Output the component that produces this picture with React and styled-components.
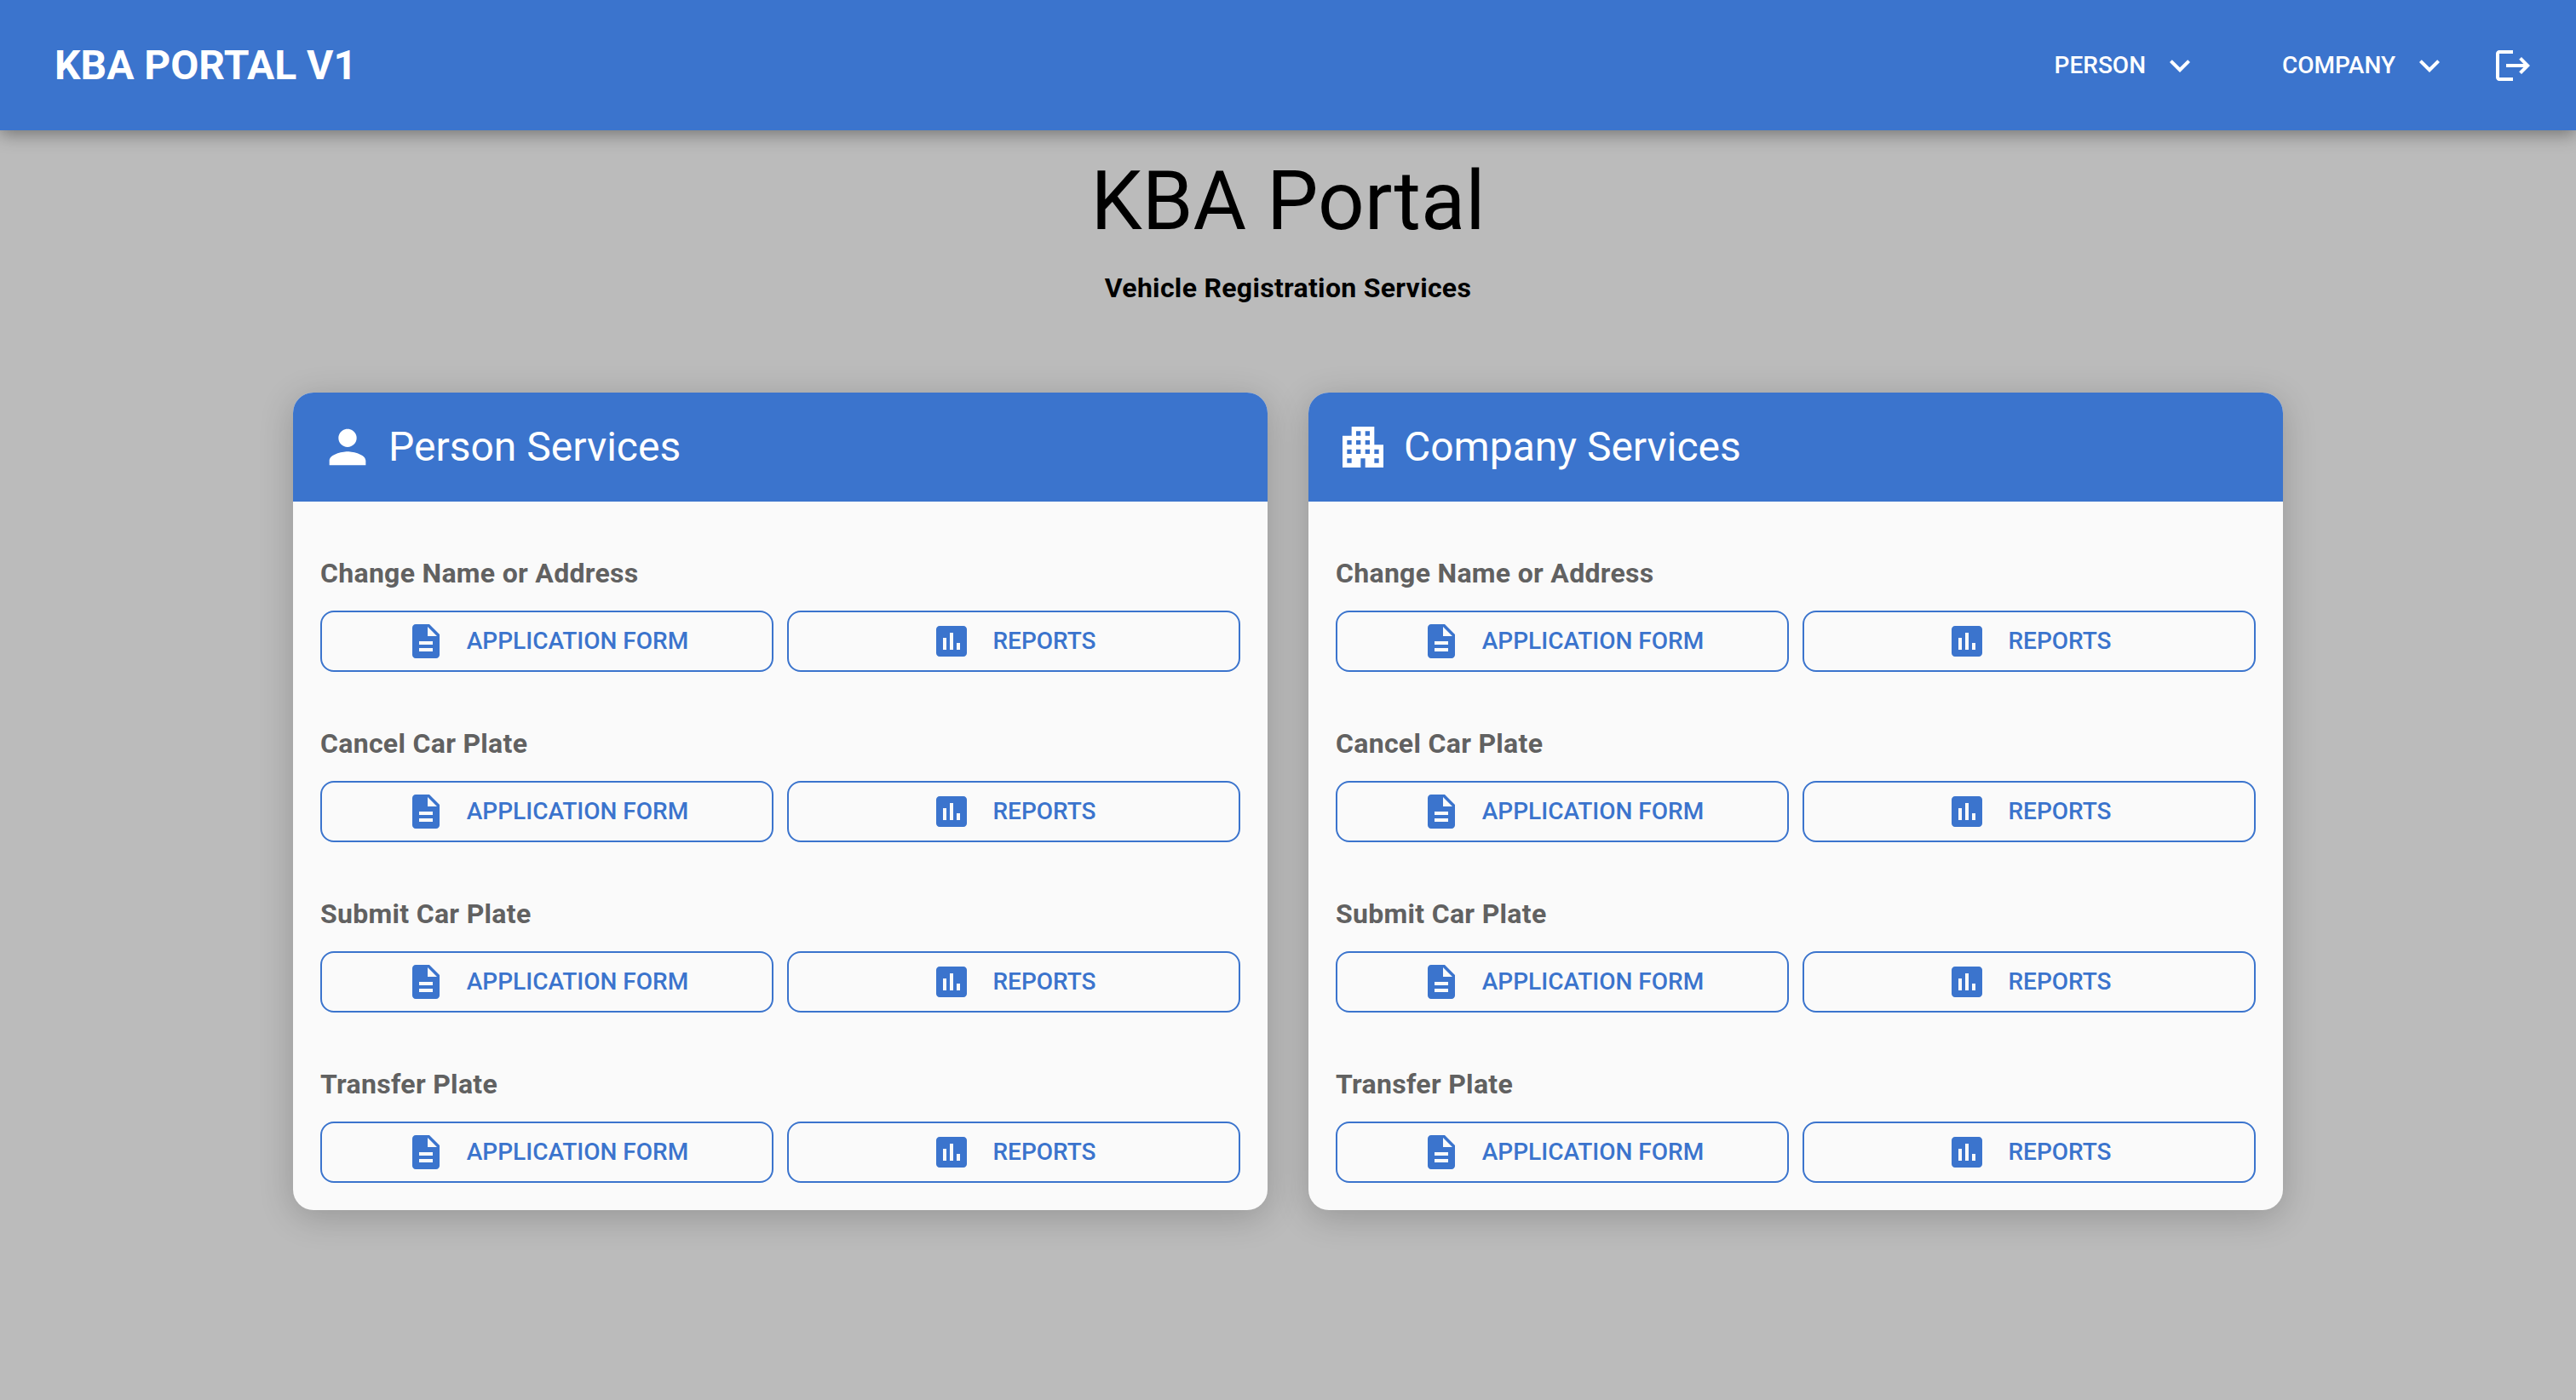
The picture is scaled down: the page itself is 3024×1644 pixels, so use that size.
import React from 'react';
import styled, {createGlobalStyle} from 'styled-components';

const blue = '#3b74cd';

const GlobalStyle = createGlobalStyle`
  html, body {
    margin: 0;
    padding: 0;
    background: #bbbbbb;
  }
  body {
    font-family: Roboto, "Liberation Sans", sans-serif;
  }
`;

/////////////// ICONS /////////////
const ICONS = {
  person: 'M12 12c2.21 0 4-1.79 4-4s-1.79-4-4-4-4 1.79-4 4 1.79 4 4 4zm0 2c-2.67 0-8 1.34-8 4v2h16v-2c0-2.66-5.33-4-8-4z',
  apartment:
    'M17 11V3H7v4H3v14h8v-4h2v4h8V11h-4zM7 19H5v-2h2v2zm0-4H5v-2h2v2zm0-4H5V9h2v2zm4 4H9v-2h2v2zm0-4H9V9h2v2zm0-4H9V5h2v2zm4 8h-2v-2h2v2zm0-4h-2V9h2v2zm0-4h-2V5h2v2zm4 12h-2v-2h2v2zm0-4h-2v-2h2v2z',
  description:
    'M14 2H6c-1.1 0-1.99.9-1.99 2L4 20c0 1.1.89 2 1.99 2H18c1.1 0 2-.9 2-2V8l-6-6zm2 16H8v-2h8v2zm0-4H8v-2h8v2zm-3-5V3.5L18.5 9H13z',
  assessment:
    'M19 3H5c-1.1 0-2 .9-2 2v14c0 1.1.9 2 2 2h14c1.1 0 2-.9 2-2V5c0-1.1-.9-2-2-2zM9 17H7v-7h2v7zm4 0h-2V7h2v10zm4 0h-2v-4h2v4z',
  expand: 'M16.59 8.59L12 13.17 7.41 8.59 6 10l6 6 6-6z',
  logout:
    'M17 7l-1.41 1.41L18.17 11H8v2h10.17l-2.58 2.58L17 17l5-5zM4 5h8V3H4c-1.1 0-2 .9-2 2v14c0 1.1.9 2 2 2h8v-2H4V5z',
};

const IconSvg = styled.svg`
  width: ${props => props.size}px;
  height: ${props => props.size}px;
  flex-shrink: 0;
  display: block;
  fill: currentColor;
`;

const Icon = ({name, size = 48}) => (
  <IconSvg size={size} viewBox="0 0 24 24" aria-hidden="true">
    <path d={ICONS[name]} />
  </IconSvg>
);

/////////////// TOP BAR /////////////
const TopBar = styled.header`
  height: 153px;
  box-sizing: border-box;
  padding: 0 50px 0 64px;
  display: flex;
  align-items: center;
  justify-content: space-between;
  background: ${blue};
  color: #fff;
  box-shadow: 0 4px 20px rgba(0, 0, 0, 0.4);
`;

const Brand = styled.div`
  font-size: 48px;
  font-weight: 700;
  line-height: 1;
`;

const Nav = styled.nav`
  display: flex;
  align-items: center;
`;

const NavItem = styled.button`
  display: flex;
  align-items: center;
  gap: 16px;
  margin-right: ${props => props.gap}px;
  padding: 0;
  border: 0;
  background: none;
  color: inherit;
  font-family: inherit;
  font-size: 28px;
  font-weight: 500;
`;

const LogoutButton = styled.button`
  display: block;
  padding: 0;
  border: 0;
  background: none;
  color: inherit;
`;

/////////////// HERO /////////////
const Hero = styled.div`
  padding-top: 26px;
  text-align: center;
`;

const Title = styled.h1`
  margin: 0;
  font-size: 96px;
  font-weight: 400;
  line-height: 1.2;
  color: #000;
`;

const Subtitle = styled.p`
  margin: 20px 0 0;
  font-size: 32px;
  font-weight: 700;
  line-height: 1.5;
  letter-spacing: 0.00938em;
  color: #000;
`;

/////////////// CARDS /////////////
const CardGrid = styled.main`
  display: grid;
  grid-template-columns: repeat(2, 1144px);
  gap: 48px;
  justify-content: center;
  margin-top: 99px;
  padding-bottom: 222px;
`;

const Card = styled.section`
  border-radius: 24px;
  overflow: hidden;
  background: #fafafa;
  box-shadow: 0 8px 40px rgba(0, 0, 0, 0.2);
`;

const CardHeader = styled.div`
  height: 128px;
  box-sizing: border-box;
  padding: 0 32px;
  display: flex;
  align-items: center;
  gap: 16px;
  background: ${blue};
  color: #fff;
`;

const CardTitle = styled.h2`
  margin: 0;
  font-size: 48px;
  font-weight: 400;
  line-height: 1;
`;

const CardBody = styled.div`
  padding: 60px 32px 32px;
  display: flex;
  flex-direction: column;
  gap: 60px;
`;

const ServiceLabel = styled.h3`
  margin: 0 0 20px;
  font-size: 32px;
  font-weight: 700;
  line-height: 48px;
  letter-spacing: 0.00938em;
  color: #616161;
`;

const ButtonRow = styled.div`
  display: grid;
  grid-template-columns: 1fr 1fr;
  gap: 16px;
`;

const ActionButton = styled.button`
  height: 72px;
  box-sizing: border-box;
  display: flex;
  align-items: center;
  justify-content: center;
  gap: 24px;
  padding: 0 0 1px;
  border: 2px solid ${blue};
  border-radius: 16px;
  background: transparent;
  color: ${blue};
  font-family: inherit;
  font-size: 28px;
  font-weight: 500;
`;

const SERVICES = ['Change Name or Address', 'Cancel Car Plate', 'Submit Car Plate', 'Transfer Plate'];

const ServiceCard = ({icon, title}) => (
  <Card>
    <CardHeader>
      <Icon name={icon} size={64} />
      <CardTitle>{title}</CardTitle>
    </CardHeader>
    <CardBody>
      {SERVICES.map(service => (
        <div key={service}>
          <ServiceLabel>{service}</ServiceLabel>
          <ButtonRow>
            <ActionButton>
              <Icon name="description" />
              APPLICATION FORM
            </ActionButton>
            <ActionButton>
              <Icon name="assessment" />
              REPORTS
            </ActionButton>
          </ButtonRow>
        </div>
      ))}
    </CardBody>
  </Card>
);

export default function App() {
  return (
    <>
      <GlobalStyle />
      <TopBar>
        <Brand>KBA PORTAL V1</Brand>
        <Nav>
          <NavItem gap={96}>
            PERSON
            <Icon name="expand" />
          </NavItem>
          <NavItem gap={50}>
            COMPANY
            <Icon name="expand" />
          </NavItem>
          <LogoutButton>
            <Icon name="logout" />
          </LogoutButton>
        </Nav>
      </TopBar>
      <Hero>
        <Title>KBA Portal</Title>
        <Subtitle>Vehicle Registration Services</Subtitle>
      </Hero>
      <CardGrid>
        <ServiceCard icon="person" title="Person Services" />
        <ServiceCard icon="apartment" title="Company Services" />
      </CardGrid>
    </>
  );
}
